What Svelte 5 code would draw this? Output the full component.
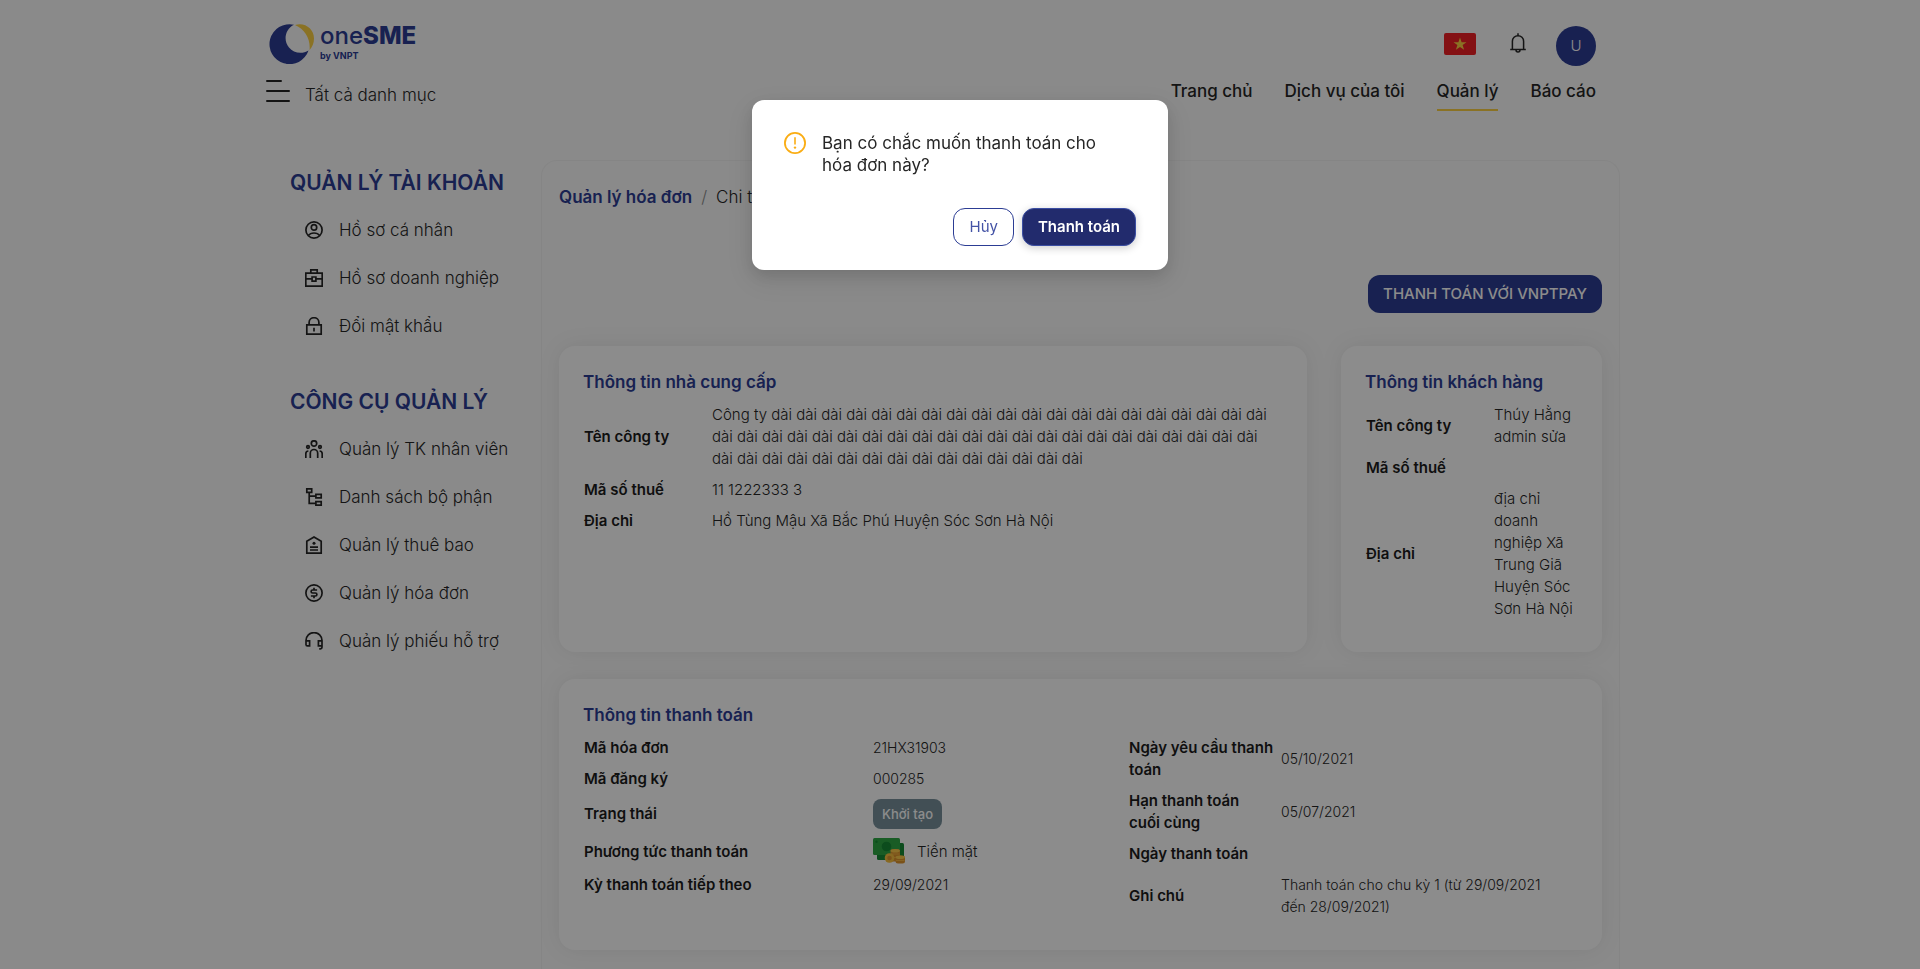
<script>
  const nav = [
    { label: 'Trang chủ' },
    { label: 'Dịch vụ của tôi' },
    { label: 'Quản lý', active: true },
    { label: 'Báo cáo' }
  ];

  const groups = [
    {
      title: 'QUẢN LÝ TÀI KHOẢN',
      items: [
        { icon: 'user', label: 'Hồ sơ cá nhân' },
        { icon: 'briefcase', label: 'Hồ sơ doanh nghiệp' },
        { icon: 'lock', label: 'Đổi mật khẩu' }
      ]
    },
    {
      title: 'CÔNG CỤ QUẢN LÝ',
      items: [
        { icon: 'team', label: 'Quản lý TK nhân viên' },
        { icon: 'tree', label: 'Danh sách bộ phận' },
        { icon: 'tag', label: 'Quản lý thuê bao' },
        { icon: 'dollar', label: 'Quản lý hóa đơn' },
        { icon: 'headset', label: 'Quản lý phiếu hỗ trợ' }
      ]
    }
  ];

  const long = (n) => Array(n).fill('dài').join(' ');
  const supplier = [
    ['Tên công ty', [`Công ty ${long(20)}`, long(22), long(15)]],
    ['Mã số thuế', ['11 1222333 3']],
    ['Địa chỉ', ['Hồ Tùng Mậu Xã Bắc Phú Huyện Sóc Sơn Hà Nội']]
  ];
  const customer = [
    ['Tên công ty', ['Thúy Hằng', 'admin sửa']],
    ['Mã số thuế', []],
    ['Địa chỉ', ['địa chỉ', 'doanh', 'nghiệp Xã', 'Trung Giã', 'Huyện Sóc', 'Sơn Hà Nội']]
  ];
  const dates = [
    ['Ngày yêu cầu thanh\ntoán', ['05/10/2021']],
    ['Hạn thanh toán\ncuối cùng', ['05/07/2021']],
    ['Ngày thanh toán', []],
    ['Ghi chú', ['Thanh toán cho chu kỳ 1 (từ 29/09/2021', 'đến 28/09/2021)']]
  ];

  let open = $state(true);
</script>

{#snippet rows(list)}
  {#each list as [label, lines]}
    <tr>
      <th scope="row">{label}</th>
      <td>{#each lines as line, i}{#if i}<br />{/if}{line}{/each}</td>
    </tr>
  {/each}
{/snippet}

{#snippet icon(name)}
  <svg class="icon" viewBox="0 0 18 18" fill="none" stroke="currentColor" stroke-width="1.7" aria-hidden="true">
    {#if name === 'user'}
      <circle cx="9" cy="9" r="8.1" />
      <circle cx="9" cy="6.4" r="2.7" />
      <path d="M3.3 14.6C4.6 12.8 6.6 12 9 12s4.4.8 5.7 2.6" />
    {:else if name === 'briefcase'}
      <path d="M.8 4.2h16.4v13H.8zM5.8 4.2V.9h6.4v3.3M.8 9.8h6M11.2 9.8h6M7.1 8h3.8v4.2H7.1z" />
    {:else if name === 'lock'}
      <path d="M1.8 7.8h14.4v9.4H1.8zM4.1 7.8V5.6a4.9 4.9 0 0 1 9.8 0v2.2M9 10.8v3.6" />
    {:else if name === 'team'}
      <circle cx="9" cy="3.5" r="2.7" />
      <circle cx="3" cy="7" r="1.3" />
      <circle cx="15" cy="7" r="1.3" />
      <path d="M5.3 18v-4.8a3.7 3.7 0 0 1 7.4 0V18M.8 18v-4.2c0-1.6.8-2.7 2.6-2.8M17.2 18v-4.2c0-1.6-.8-2.7-2.6-2.8" />
    {:else if name === 'tree'}
      <path d="M1.8.9h4.9v3.5H1.8zM10.9 6.4h5.3v3.5h-5.3zM10.9 13.6h5.3v3.5h-5.3zM4.2 4.4v11h6.7M4.2 8.1h6.7" />
    {:else if name === 'tag'}
      <path d="M1.8 5.3 9 1l7.2 4.3v11.9H1.8zM5 11.2h8M5 14h8" />
      <circle cx="9" cy="7.3" r="1.5" fill="currentColor" stroke="none" />
    {:else if name === 'dollar'}
      <circle cx="9" cy="9" r="8.1" />
      <path d="M12.1 6H7.6a1.5 1.5 0 0 0 0 3h2.8a1.5 1.5 0 0 1 0 3H5.9M9 3.8V6M9 12v2.2" />
    {:else if name === 'headset'}
      <path d="M1 13V8.6a8 8 0 0 1 16 0V15M1 8.8h3.6v5H2.4c-1 0-1.4-.4-1.4-1.4zM17 8.8h-3.6v5H17M17 13.4v1.8c0 1-.6 1.6-1.6 1.6h-1.2" />
    {/if}
  </svg>
{/snippet}

<div class="page">
  <header class="container header">
    <div class="header-left">
      <a class="logo" href="#home" aria-label="oneSME by VNPT">
        <svg class="logo-mark" viewBox="0 0 46 40" aria-hidden="true">
          <path fill="#fbcf43" d="M26 1C36-2 45 5 45 14.500c0 4.500-1.600 8.600-4.400 11.500C41.500 14.500 36 5.500 26 1z" />
          <path fill="#2c3d94" d="M25 .7A20 20 0 1 0 39.500 26.400C33 30.500 24.500 29 20 23.500 14 16.500 16 5 25 .7z" />
        </svg>
        <span class="logo-text">
          <span class="brand">one<b>SME</b></span>
          <span class="by">by VNPT</span>
        </span>
      </a>
      <button class="catalog">
        <svg width="24" height="24" viewBox="0 0 24 24" stroke="currentColor" stroke-width="2" stroke-linecap="round" aria-hidden="true">
          <path d="M1 2h14M1 12h22M1 22h22" />
        </svg>
        <span>Tất cả danh mục</span>
      </button>
    </div>
    <div class="header-right">
      <div class="tools">
        <button class="plain" aria-label="Tiếng Việt">
          <svg width="32" height="22" viewBox="0 0 32 22">
            <rect width="32" height="22" rx="2" fill="#f01f26" />
            <path fill="#fbd043" d="m16 4.600 1.600 4.600h4.900l-3.900 2.900 1.500 4.700-4.100-2.900-4.100 2.900 1.500-4.700-3.900-2.900h4.900z" />
          </svg>
        </button>
        <button class="plain" aria-label="Thông báo">
          <svg width="16" height="22" viewBox="0 0 16 22" fill="none" stroke="currentColor" stroke-width="1.500">
            <path d="M.2 16.500h15.600M2.400 16.500V8.300a5.600 5.600 0 0 1 11.200 0v8.200M8 .3v2.400M6 17c0 1.200.8 2 2 2s2-.8 2-2" />
          </svg>
        </button>
        <button class="avatar">U</button>
      </div>
      <nav class="nav">
        {#each nav as item}
          <a href="#nav" class:active={item.active}>{item.label}</a>
        {/each}
      </nav>
    </div>
  </header>

  <div class="container body">
    <aside class="sidebar">
      {#each groups as group}
        <section>
          <h2>{group.title}</h2>
          <ul>
            {#each group.items as item}
              <li><a href="#menu">{@render icon(item.icon)}<span>{item.label}</span></a></li>
            {/each}
          </ul>
        </section>
      {/each}
    </aside>

    <main class="panel">
      <nav class="crumbs">
        <a href="#invoices">Quản lý hóa đơn</a>
        <i>/</i>
        <span>Chi tiết hóa đơn</span>
      </nav>
      <div class="actions">
        <button class="pay">THANH TOÁN VỚI VNPTPAY</button>
      </div>
      <div class="cards">
        <section class="card">
          <h3>Thông tin nhà cung cấp</h3>
          <table class="narrow"><tbody>{@render rows(supplier)}</tbody></table>
        </section>
        <section class="card">
          <h3>Thông tin khách hàng</h3>
          <table class="narrow"><tbody>{@render rows(customer)}</tbody></table>
        </section>
      </div>
      <section class="card">
        <h3>Thông tin thanh toán</h3>
        <div class="split">
          <table class="wide">
            <tbody>
              {@render rows([['Mã hóa đơn', ['21HX31903']], ['Mã đăng ký', ['000285']]])}
              <tr>
                <th scope="row">Trạng thái</th>
                <td><span class="badge">Khởi tạo</span></td>
              </tr>
              <tr>
                <th scope="row">Phương tức thanh toán</th>
                <td>
                  <span class="cash">
                    <svg width="32" height="27" viewBox="0 0 32 27" aria-hidden="true">
                      <rect x="4" y="5" width="27" height="17" rx="1.500" fill="#178a35" />
                      <rect width="27" height="17" rx="1.500" fill="#2fa844" />
                      <circle cx="13.500" cy="8.500" r="4.800" fill="#178a35" />
                      <circle cx="3.500" cy="3.800" r="1.200" fill="#178a35" />
                      <rect x="17.500" y="11" width="9.500" height="12.500" rx="2.500" fill="#e0962f" />
                      <path d="M18 16h8.500M18 19.500h8.500" stroke="#f4b443" stroke-width="1" />
                      <ellipse cx="22.200" cy="12.800" rx="4.700" ry="1.800" fill="#fbc94a" />
                      <rect x="22.500" y="17.500" width="9.500" height="8" rx="2.500" fill="#e0962f" />
                      <path d="M23 22.500h8.500" stroke="#f4b443" stroke-width="1" />
                      <ellipse cx="27.200" cy="19.300" rx="4.700" ry="1.800" fill="#fbc94a" />
                      <circle cx="16.500" cy="20" r="4.800" fill="#f8bf3f" />
                      <circle cx="16.500" cy="20" r="2.300" fill="#e0962f" />
                    </svg>
                    Tiền mặt
                  </span>
                </td>
              </tr>
              {@render rows([['Kỳ thanh toán tiếp theo', ['29/09/2021']]])}
            </tbody>
          </table>
          <table class="mid"><tbody>{@render rows(dates)}</tbody></table>
        </div>
      </section>
    </main>
  </div>
</div>

{#if open}
  <div class="mask">
    <div class="modal" role="dialog" aria-modal="true" aria-labelledby="confirm-title">
      <div class="message">
        <svg width="22" height="22" viewBox="0 0 22 22" fill="none" stroke="#faad14" stroke-width="1.800" aria-hidden="true">
          <circle cx="11" cy="11" r="10.100" />
          <path d="M11 5.200v7.300" stroke-width="1.600" />
          <circle cx="11" cy="15.600" r="1.200" fill="#faad14" stroke="none" />
        </svg>
        <p id="confirm-title">Bạn có chắc muốn thanh toán cho<br />hóa đơn này?</p>
      </div>
      <div class="buttons">
        <button class="cancel" onclick={() => (open = false)}>Hủy</button>
        <button class="confirm" onclick={() => (open = false)}>Thanh toán</button>
      </div>
    </div>
  </div>
{/if}

<style>
  :global(body) {
    background: #fbfbfb;
  }
  .page,
  .mask {
    font-family: Inter, 'Noto Sans', sans-serif;
    font-size: 15px;
    line-height: 22px;
    color: #262626;
  }
  .page *,
  .mask * {
    box-sizing: border-box;
  }
  .page {
    min-height: 100vh;
    display: flex;
    flex-direction: column;
  }
  button {
    font: inherit;
    color: inherit;
    border: 0;
    background: none;
    padding: 0;
    cursor: pointer;
  }
  a {
    color: inherit;
    text-decoration: none;
  }
  h2,
  h3,
  p,
  ul {
    margin: 0;
    padding: 0;
  }
  li {
    list-style: none;
  }
  svg {
    display: block;
    flex: none;
  }
  .container {
    width: 100%;
    max-width: 1400px;
    margin: 0 auto;
  }
  .header {
    display: flex;
    justify-content: space-between;
    padding: 24px 64px 0 6px;
    height: 160px;
  }
  .logo {
    display: flex;
    gap: 5px;
    margin-left: 3px;
    color: #2c3d94;
  }
  .logo-mark {
    width: 46px;
    height: 40px;
  }
  .logo-text {
    display: flex;
    flex-direction: column;
  }
  .brand {
    font-size: 24px;
    line-height: 23px;
    font-weight: 500;
  }
  .brand b {
    font-weight: 800;
  }
  .by {
    font-size: 9px;
    line-height: 17px;
    font-weight: 700;
  }
  .catalog {
    display: flex;
    gap: 15px;
    margin-top: 15px;
    font-size: 17px;
    font-weight: 300;
    line-height: 32px;
  }
  .header-right {
    display: flex;
    flex-direction: column;
    align-items: flex-end;
  }
  .tools {
    display: flex;
    align-items: center;
    gap: 34px;
    margin-top: 2px;
  }
  .plain {
    margin-bottom: 4px;
  }
  .avatar {
    width: 40px;
    height: 40px;
    border-radius: 50%;
    background: #2c3d94;
    color: #fff;
    font-weight: 300;
    font-size: 15px;
    margin-left: -4px;
  }
  .nav {
    display: flex;
    gap: 32px;
    margin-top: 13px;
    font-size: 17px;
    font-weight: 500;
    line-height: 24px;
  }
  .nav a {
    padding-bottom: 6px;
    border-bottom: 2px solid transparent;
  }
  .nav .active {
    border-color: #fbcf43;
  }
  .body {
    display: flex;
    flex: 1;
    padding: 0 40px 0 30px;
  }
  .sidebar {
    flex: 0 0 251px;
    padding-top: 8px;
  }
  .sidebar section {
    margin-bottom: 37px;
  }
  .sidebar h2 {
    font-size: 21px;
    line-height: 30px;
    font-weight: 600;
    color: #2c3d94;
    white-space: nowrap;
    margin-bottom: 8px;
  }
  .sidebar li a {
    display: flex;
    align-items: center;
    gap: 16px;
    height: 48px;
    padding-left: 15px;
    font-size: 17px;
    font-weight: 300;
    white-space: nowrap;
  }
  .icon {
    width: 18px;
    height: 18px;
  }
  .panel {
    flex: 1;
    min-width: 0;
    padding: 25px 17px 19px;
    border: 1px solid #f3f3f3;
    border-bottom: 0;
    border-radius: 16px 16px 0 0;
  }
  .crumbs {
    display: flex;
    gap: 9px;
    font-size: 17px;
    font-weight: 300;
  }
  .crumbs a {
    color: #2c3d94;
    font-weight: 600;
  }
  .crumbs i {
    color: #8c8c8c;
    font-style: normal;
  }
  .actions {
    display: flex;
    justify-content: flex-end;
    margin: 67px 0 33px;
  }
  .pay {
    height: 38px;
    padding: 0 15px;
    border-radius: 12px;
    background: #2c3d94;
    color: #fff;
    font-weight: 500;
  }
  .cards {
    display: grid;
    grid-template-columns: minmax(0, 1fr) 261px;
    gap: 34px;
    margin-bottom: 27px;
  }
  .card {
    padding: 24px 24px 28px;
    border-radius: 16px;
    background: #fff;
    box-shadow: 0 0 24px rgba(0, 0, 0, 0.07);
  }
  .card h3 {
    font-size: 17px;
    line-height: 24px;
    font-weight: 600;
    color: #2c3d94;
    margin-bottom: 5px;
  }
  table {
    border-collapse: collapse;
    table-layout: fixed;
    width: 100%;
  }
  th,
  td {
    padding: 5px 0 4px 1px;
    text-align: left;
    vertical-align: middle;
  }
  th {
    font-weight: 600;
    color: #1c1c1c;
    white-space: pre-line;
  }
  td {
    font-weight: 300;
    white-space: nowrap;
  }
  .split td {
    font-size: 14px;
  }
  .narrow th {
    width: 128px;
  }
  .wide th {
    width: 289px;
  }
  .mid th {
    width: 152px;
  }
  .split {
    display: grid;
    grid-template-columns: 545px minmax(0, 1fr);
    align-items: start;
  }
  .badge {
    display: block;
    width: fit-content;
    padding: 0 9px;
    border-radius: 8px;
    background: #78909c;
    color: #fff;
    font-size: 13px;
    line-height: 30px;
    font-weight: 500;
  }
  .cash {
    display: flex;
    align-items: center;
    gap: 12px;
    font-size: 15px;
  }
  .mask {
    position: fixed;
    inset: 0;
    display: flex;
    justify-content: center;
    align-items: flex-start;
    padding-top: 100px;
    background: rgba(0, 0, 0, 0.45);
  }
  .modal {
    width: 416px;
    padding: 32px 32px 24px;
    border-radius: 12px;
    background: #fff;
    box-shadow: 0 6px 16px rgba(0, 0, 0, 0.12), 0 9px 28px 8px rgba(0, 0, 0, 0.06);
  }
  .message {
    display: flex;
    gap: 16px;
  }
  .message p {
    font-size: 17px;
    white-space: nowrap;
  }
  .buttons {
    display: flex;
    justify-content: flex-end;
    gap: 8px;
    margin-top: 32px;
  }
  .buttons button {
    height: 38px;
    padding: 0 15px;
    border: 1px solid #2c3d94;
    border-radius: 12px;
  }
  .cancel {
    color: #4453a6;
  }
  .buttons .confirm {
    background: #222b6d;
    border-color: #3b4ea3;
    color: #fff;
    font-weight: 600;
    box-shadow: 0 2px 8px rgba(0, 0, 0, 0.2);
  }
</style>
